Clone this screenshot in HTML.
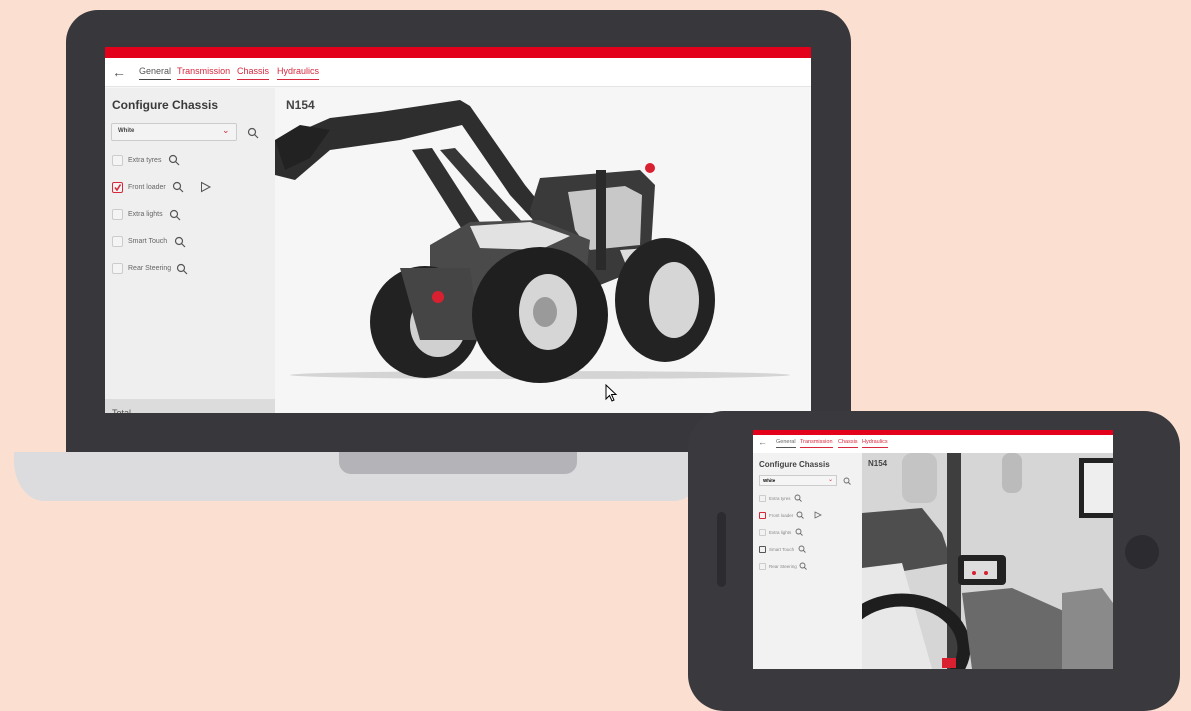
<!DOCTYPE html>
<html><head><meta charset="utf-8"><style>
*{margin:0;padding:0;box-sizing:border-box}
body{width:1191px;height:669px;background:#fbe0d2;position:relative;overflow:hidden;font-family:"Liberation Sans",sans-serif}
.abs{position:absolute}
.nav a{position:absolute;font-size:9px;color:#d6283d;border-bottom:1px solid #d6283d;padding-bottom:3px}
.cb{position:absolute;width:11px;height:11px;border:1px solid #ccc;border-radius:2px;background:#f4f4f4}
.lbl{position:absolute;font-size:7px;color:#666}
.tcb{position:absolute;width:7px;height:7px;border:1px solid #ccc;border-radius:1px}
.tl{position:absolute;font-size:4.5px;color:#888}
</style></head><body>
<!-- laptop base -->
<div class="abs" style="left:14px;top:452px;width:690px;height:49px;background:#dcdcde;border-radius:0 0 30px 30px/0 0 40px 40px"></div>
<div class="abs" style="left:339px;top:452px;width:238px;height:22px;background:#b4b4b8;border-radius:0 0 12px 12px"></div>
<!-- laptop body -->
<div class="abs" style="left:66px;top:10px;width:785px;height:442px;background:#38383c;border-radius:32px 32px 0 0"></div>
<!-- laptop screen -->
<div class="abs" style="left:105px;top:47px;width:706px;height:366px;background:#f6f6f6;overflow:hidden">
  <div class="abs" style="left:0;top:0;width:706px;height:11px;background:#e2001a"></div>
  <div class="abs nav" style="left:0;top:11px;width:706px;height:29px;background:#fff;border-bottom:1px solid #e4e4e4">
    <div class="abs" style="left:7px;top:6px;font-size:14px;color:#555">&#8592;</div>
    <a style="left:34px;top:8px;color:#555;border-color:#444">General</a>
    <a style="left:72px;top:8px">Transmission</a>
    <a style="left:132px;top:8px">Chassis</a>
    <a style="left:172px;top:8px">Hydraulics</a>
  </div>
  <div class="abs" style="left:0;top:41px;width:170px;height:325px;background:#efefef">
    <div class="abs" style="left:7px;top:10px;font-size:12px;font-weight:bold;color:#3a3a3a">Configure Chassis</div>
    <div class="abs" style="left:6px;top:35px;width:126px;height:18px;border:1px solid #ccc;border-radius:2px;background:#f3f3f3">
      <span class="abs" style="left:6px;top:4px;font-size:6px;font-weight:bold;color:#444">White</span>
      <span class="abs" style="left:110px;top:1px;font-size:9px;color:#d6283d">&#8964;</span>
    </div>
    <svg class="abs" style="left:142px;top:39px" width="12" height="12"><circle cx="5" cy="5" r="3.5" fill="none" stroke="#555" stroke-width="1.2"/><line x1="7.5" y1="7.5" x2="11" y2="11" stroke="#555" stroke-width="1.2"/></svg>
    <div class="cb" style="left:7px;top:67px"></div><div class="lbl" style="left:23px;top:69px">Extra tyres</div>
    <svg class="abs" style="left:63px;top:66px" width="12" height="12"><circle cx="5" cy="5" r="3.5" fill="none" stroke="#555" stroke-width="1.2"/><line x1="7.5" y1="7.5" x2="11" y2="11" stroke="#555" stroke-width="1.2"/></svg>
    <div class="cb" style="left:7px;top:94px;border-color:#d6283d;border-width:1.5px"><svg width="9" height="9" style="position:absolute;left:0;top:0"><path d="M2 4.5 L4 7 L7.5 1.5" stroke="#d6283d" stroke-width="1.6" fill="none"/></svg></div><div class="lbl" style="left:23px;top:96px">Front loader</div>
    <svg class="abs" style="left:67px;top:93px" width="12" height="12"><circle cx="5" cy="5" r="3.5" fill="none" stroke="#555" stroke-width="1.2"/><line x1="7.5" y1="7.5" x2="11" y2="11" stroke="#555" stroke-width="1.2"/></svg>
    <svg class="abs" style="left:95px;top:93px" width="12" height="12"><path d="M1.5 1.5 L10 6 L1.5 10.5 Z" fill="none" stroke="#555" stroke-width="1"/></svg>
    <div class="cb" style="left:7px;top:121px"></div><div class="lbl" style="left:23px;top:123px">Extra lights</div>
    <svg class="abs" style="left:64px;top:121px" width="12" height="12"><circle cx="5" cy="5" r="3.5" fill="none" stroke="#555" stroke-width="1.2"/><line x1="7.5" y1="7.5" x2="11" y2="11" stroke="#555" stroke-width="1.2"/></svg>
    <div class="cb" style="left:7px;top:148px"></div><div class="lbl" style="left:23px;top:150px">Smart Touch</div>
    <svg class="abs" style="left:69px;top:148px" width="12" height="12"><circle cx="5" cy="5" r="3.5" fill="none" stroke="#555" stroke-width="1.2"/><line x1="7.5" y1="7.5" x2="11" y2="11" stroke="#555" stroke-width="1.2"/></svg>
    <div class="cb" style="left:7px;top:175px"></div><div class="lbl" style="left:23px;top:177px">Rear Steering</div>
    <svg class="abs" style="left:71px;top:175px" width="12" height="12"><circle cx="5" cy="5" r="3.5" fill="none" stroke="#555" stroke-width="1.2"/><line x1="7.5" y1="7.5" x2="11" y2="11" stroke="#555" stroke-width="1.2"/></svg>
    <div class="abs" style="left:0;top:311px;width:170px;height:20px;background:#dcdcdc"><span class="abs" style="left:7px;top:9px;font-size:9px;color:#555">Total</span></div>
  </div>
  <div class="abs" style="left:181px;top:51px;font-size:12px;font-weight:bold;color:#444">N154</div>
  <!-- tractor -->
  <svg class="abs" style="left:170px;top:41px" width="536" height="325" viewBox="275 88 536 325">
    <ellipse cx="540" cy="375" rx="250" ry="4" fill="#d4d4d4"/>
    <!-- loader arms -->
    <path d="M280 140 L330 118 L380 112 L460 100 L470 106 L525 185 L560 228 L548 236 L510 195 L462 125 L400 140 L330 150 L295 180 L275 175 L275 140 Z" fill="#2e2e2e"/>
    <path d="M275 140 L300 125 L330 130 L310 158 L285 170 Z" fill="#222"/>
    <path d="M412 150 L432 148 L488 235 L470 242 Z" fill="#303030"/>
    <path d="M440 150 L455 148 L525 225 L512 232 Z" fill="#363636"/>
    <!-- cab -->
    <path d="M540 178 L640 170 L655 185 L650 265 L600 285 L545 270 L530 210 Z" fill="#3a3a3a"/>
    <path d="M568 192 L625 186 L642 195 L640 245 L590 250 L575 230 Z" fill="#c8c8c8"/>
    <rect x="596" y="170" width="10" height="100" fill="#2a2a2a"/>
    <!-- hood -->
    <path d="M430 245 L470 222 L540 220 L590 240 L585 285 L470 300 L430 285 Z" fill="#4a4a4a"/>
    <path d="M470 226 L530 222 L570 236 L540 250 L480 248 Z" fill="#e2e2e2"/>
    <path d="M620 250 L690 245 L700 270 L630 275 Z" fill="#ddd"/>
    <!-- rear left wheel -->
    <ellipse cx="425" cy="322" rx="55" ry="56" fill="#222"/>
    <ellipse cx="438" cy="325" rx="28" ry="32" fill="#d0d0d0"/>
    <path d="M400 268 L470 268 L480 340 L420 340 Z" fill="#454545"/>
    <circle cx="438" cy="297" r="6" fill="#d92030"/>
    <!-- front wheel -->
    <ellipse cx="540" cy="315" rx="68" ry="68" fill="#1f1f1f"/>
    <ellipse cx="548" cy="312" rx="29" ry="38" fill="#d6d6d6"/>
    <ellipse cx="545" cy="312" rx="12" ry="15" fill="#9a9a9a"/>
    <!-- rear right wheel -->
    <ellipse cx="665" cy="300" rx="50" ry="62" fill="#232323"/>
    <ellipse cx="674" cy="300" rx="25" ry="38" fill="#d6d6d6"/>
    <circle cx="650" cy="168" r="5" fill="#d92030"/>
  </svg>
  <svg class="abs" style="left:500px;top:337px" width="14" height="20"><path d="M1 1 L1 15 L4.5 11.5 L7 17 L9 16 L6.5 10.5 L11 10.5 Z" fill="#fff" stroke="#000" stroke-width="1"/></svg>
</div>
<!-- tablet -->
<div class="abs" style="left:688px;top:411px;width:492px;height:300px;background:#3a3a3e;border-radius:36px"></div>
<div class="abs" style="left:717px;top:512px;width:9px;height:75px;background:#2c2c30;border-radius:5px"></div>
<div class="abs" style="left:1125px;top:535px;width:34px;height:34px;background:#2c2c30;border-radius:50%"></div>
<div class="abs" style="left:753px;top:430px;width:360px;height:239px;background:#f2f2f2;overflow:hidden">
  <div class="abs" style="left:0;top:0;width:360px;height:5px;background:#e2001a"></div>
  <div class="abs" style="left:0;top:5px;width:360px;height:18px;background:#fff">
    <div class="abs" style="left:5px;top:2px;font-size:9px;color:#666">&#8592;</div>
    <div class="abs" style="left:23px;top:4px;font-size:5.5px;color:#666;border-bottom:1px solid #555;padding-bottom:2px">General</div>
    <div class="abs" style="left:47px;top:4px;font-size:5.5px;color:#d6283d;border-bottom:1px solid #d6283d;padding-bottom:2px">Transmission</div>
    <div class="abs" style="left:85px;top:4px;font-size:5.5px;color:#d6283d;border-bottom:1px solid #d6283d;padding-bottom:2px">Chassis</div>
    <div class="abs" style="left:109px;top:4px;font-size:5.5px;color:#d6283d;border-bottom:1px solid #d6283d;padding-bottom:2px">Hydraulics</div>
  </div>
  <div class="abs" style="left:6px;top:30px;font-size:8px;font-weight:bold;color:#444">Configure Chassis</div>
  <div class="abs" style="left:6px;top:45px;width:78px;height:11px;border:1px solid #ccc;background:#f5f5f5"><span class="abs" style="left:3px;top:2px;font-size:4.5px;font-weight:bold">White</span><span class="abs" style="left:68px;top:0px;font-size:6px;color:#d6283d">&#8964;</span></div>
  <svg class="abs" style="left:90px;top:47px" width="8" height="8"><circle cx="3.5" cy="3.5" r="2.5" fill="none" stroke="#666" stroke-width="0.9"/><line x1="5.3" y1="5.3" x2="7.5" y2="7.5" stroke="#666" stroke-width="0.9"/></svg>
  <div class="tcb" style="left:6px;top:65px"></div><div class="tl" style="left:16px;top:66px">Extra tyres</div>
  <div class="tcb" style="left:6px;top:82px;border-color:#d6283d"></div><div class="tl" style="left:16px;top:83px">Front loader</div>
  <div class="tcb" style="left:6px;top:99px"></div><div class="tl" style="left:16px;top:100px">Extra lights</div>
  <div class="tcb" style="left:6px;top:116px;border-color:#555"></div><div class="tl" style="left:16px;top:117px">Smart Touch</div>
  <div class="tcb" style="left:6px;top:133px"></div><div class="tl" style="left:16px;top:134px">Rear Steering</div>
  <svg class="abs" style="left:41px;top:64px" width="8" height="8"><circle cx="3.5" cy="3.5" r="2.5" fill="none" stroke="#666" stroke-width="0.9"/><line x1="5.3" y1="5.3" x2="7.5" y2="7.5" stroke="#666" stroke-width="0.9"/></svg>
  <svg class="abs" style="left:43px;top:81px" width="8" height="8"><circle cx="3.5" cy="3.5" r="2.5" fill="none" stroke="#666" stroke-width="0.9"/><line x1="5.3" y1="5.3" x2="7.5" y2="7.5" stroke="#666" stroke-width="0.9"/></svg>
  <svg class="abs" style="left:61px;top:81px" width="8" height="8"><path d="M1 1 L7 4 L1 7 Z" fill="none" stroke="#666" stroke-width="0.8"/></svg>
  <svg class="abs" style="left:42px;top:98px" width="8" height="8"><circle cx="3.5" cy="3.5" r="2.5" fill="none" stroke="#666" stroke-width="0.9"/><line x1="5.3" y1="5.3" x2="7.5" y2="7.5" stroke="#666" stroke-width="0.9"/></svg>
  <svg class="abs" style="left:45px;top:115px" width="8" height="8"><circle cx="3.5" cy="3.5" r="2.5" fill="none" stroke="#666" stroke-width="0.9"/><line x1="5.3" y1="5.3" x2="7.5" y2="7.5" stroke="#666" stroke-width="0.9"/></svg>
  <svg class="abs" style="left:46px;top:132px" width="8" height="8"><circle cx="3.5" cy="3.5" r="2.5" fill="none" stroke="#666" stroke-width="0.9"/><line x1="5.3" y1="5.3" x2="7.5" y2="7.5" stroke="#666" stroke-width="0.9"/></svg>
  <svg class="abs" style="left:109px;top:23px" width="251" height="216">
    <rect width="251" height="216" fill="#d6d6d6"/>
    <path d="M0 60 L60 55 L80 80 L90 110 L0 125 Z" fill="#4e4e4e"/>
    <rect x="85" y="0" width="14" height="216" fill="#3e3e3e"/>
    <path d="M0 115 L40 110 L70 216 L0 216 Z" fill="#e8e8e8"/>
    <ellipse cx="40" cy="195" rx="62" ry="48" fill="none" stroke="#1e1e1e" stroke-width="13"/>
    <rect x="96" y="102" width="48" height="30" rx="4" fill="#222"/>
    <rect x="102" y="108" width="33" height="18" fill="#ddd"/>
    <circle cx="112" cy="120" r="2" fill="#d92030"/><circle cx="124" cy="120" r="2" fill="#d92030"/>
    <path d="M100 140 L150 135 L251 180 L251 216 L110 216 Z" fill="#6a6a6a"/>
    <path d="M200 140 L240 135 L251 150 L251 216 L200 216 Z" fill="#8a8a8a"/>
    <rect x="217" y="5" width="34" height="60" fill="#222"/>
    <rect x="222" y="10" width="29" height="50" fill="#eee"/>
    <rect x="140" y="0" width="20" height="40" rx="8" fill="#bbb"/>
    <rect x="40" y="0" width="35" height="50" rx="10" fill="#c4c4c4"/>
    <rect x="80" y="205" width="14" height="10" fill="#d92030"/>
  </svg>
  <div class="abs" style="left:115px;top:29px;font-size:8px;font-weight:bold;color:#444">N154</div>
</div>
</body></html>
